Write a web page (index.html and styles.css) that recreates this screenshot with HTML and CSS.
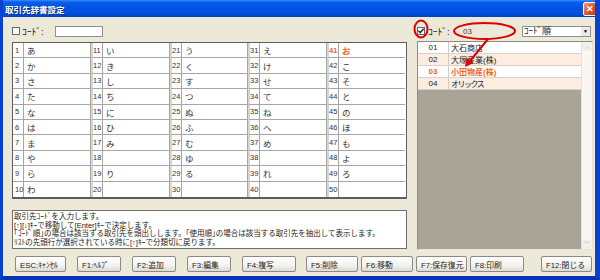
FILE: index.html
```html
<!DOCTYPE html>
<html lang="ja">
<head>
    <meta charset="UTF-8">
    <title>取引先辞書設定</title>
    <link rel="stylesheet" href="styles.css">
</head>
<body>
    <div class="window">
        <div class="titlebar">
            <span class="title">取引先辞書設定</span>
            <span class="close-btn">✕</span>
        </div>

        <div class="client">
            <div class="main">
                <div class="left">
                    <div class="toolbar">
                        <span class="check"></span>
                        <span class="label">ｺｰﾄﾞ:</span>
                        <span class="textbox code-box"></span>
                    </div>

                    <div class="kana-grid">
                        <span class="num">1</span><span class="kana">あ</span>
                        <span class="num sep">11</span><span class="kana">い</span>
                        <span class="num sep">21</span><span class="kana">う</span>
                        <span class="num sep">31</span><span class="kana">え</span>
                        <span class="num sep hot">41</span><span class="kana hot last">お</span>

                        <span class="num">2</span><span class="kana">か</span>
                        <span class="num sep">12</span><span class="kana">き</span>
                        <span class="num sep">22</span><span class="kana">く</span>
                        <span class="num sep">32</span><span class="kana">け</span>
                        <span class="num sep">42</span><span class="kana last">こ</span>

                        <span class="num">3</span><span class="kana">さ</span>
                        <span class="num sep">13</span><span class="kana">し</span>
                        <span class="num sep">23</span><span class="kana">す</span>
                        <span class="num sep">33</span><span class="kana">せ</span>
                        <span class="num sep">43</span><span class="kana last">そ</span>

                        <span class="num">4</span><span class="kana">た</span>
                        <span class="num sep">14</span><span class="kana">ち</span>
                        <span class="num sep">24</span><span class="kana">つ</span>
                        <span class="num sep">34</span><span class="kana">て</span>
                        <span class="num sep">44</span><span class="kana last">と</span>

                        <span class="num">5</span><span class="kana">な</span>
                        <span class="num sep">15</span><span class="kana">に</span>
                        <span class="num sep">25</span><span class="kana">ぬ</span>
                        <span class="num sep">35</span><span class="kana">ね</span>
                        <span class="num sep">45</span><span class="kana last">の</span>

                        <span class="num">6</span><span class="kana">は</span>
                        <span class="num sep">16</span><span class="kana">ひ</span>
                        <span class="num sep">26</span><span class="kana">ふ</span>
                        <span class="num sep">36</span><span class="kana">へ</span>
                        <span class="num sep">46</span><span class="kana last">ほ</span>

                        <span class="num">7</span><span class="kana">ま</span>
                        <span class="num sep">17</span><span class="kana">み</span>
                        <span class="num sep">27</span><span class="kana">む</span>
                        <span class="num sep">37</span><span class="kana">め</span>
                        <span class="num sep">47</span><span class="kana last">も</span>

                        <span class="num">8</span><span class="kana">や</span>
                        <span class="num sep">18</span><span class="kana"></span>
                        <span class="num sep">28</span><span class="kana">ゆ</span>
                        <span class="num sep">38</span><span class="kana"></span>
                        <span class="num sep">48</span><span class="kana last">よ</span>

                        <span class="num">9</span><span class="kana">ら</span>
                        <span class="num sep">19</span><span class="kana">り</span>
                        <span class="num sep">29</span><span class="kana">る</span>
                        <span class="num sep">39</span><span class="kana">れ</span>
                        <span class="num sep">49</span><span class="kana last">ろ</span>

                        <span class="num bottom">10</span><span class="kana bottom">わ</span>
                        <span class="num sep bottom">20</span><span class="kana bottom"></span>
                        <span class="num sep bottom">30</span><span class="kana bottom"></span>
                        <span class="num sep bottom">40</span><span class="kana bottom"></span>
                        <span class="num sep bottom">50</span><span class="kana bottom last"></span>
                    </div>

                    <div class="help">
                        <div>取引先ｺｰﾄﾞを入力します。</div>
                        <div>[↑][↓]ｷｰで移動して[Enter]ｷｰで決定します。</div>
                        <div>｢ｺｰﾄﾞ順｣の場合は該当する取引先を頭出しします。｢使用順｣の場合は該当する取引先を抽出して表示します。</div>
                        <div>ﾘｽﾄの先頭行が選択されている時に[↑]ｷｰで分類切に戻ります。</div>
                    </div>
                </div>

                <div class="right">
                    <div class="toolbar">
                        <span class="check checked">
                            <svg viewBox="0 0 8 8" width="8" height="8"><path d="M1.5 3.8 L3.2 5.6 L6.6 1.8" fill="none" stroke="#222" stroke-width="1.4"/></svg>
                        </span>
                        <span class="label">ｺｰﾄﾞ:</span>
                        <span class="textbox search-box">03</span>
                        <span class="select">
                            <span class="select-text">ｺｰﾄﾞ順</span>
                            <span class="select-arrow">▼</span>
                        </span>
                    </div>

                    <div class="list">
                        <div class="rows">
                            <div class="row"><span class="code">01</span><span class="name">大石商店</span></div>
                            <div class="row alt"><span class="code">02</span><span class="name">大塚産業(株)</span></div>
                            <div class="row hot"><span class="code">03</span><span class="name">小田物産(株)</span></div>
                            <div class="row alt"><span class="code">04</span><span class="name kata">オリックス</span></div>
                        </div>
                        <div class="scrollbar">
                            <span class="sb-btn">︿</span>
                            <span class="sb-btn">﹀</span>
                        </div>
                    </div>
                </div>
            </div>

            <div class="buttons">
                <div class="btn-group wide-gap">
                    <span class="btn w51">ESC:ｷｬﾝｾﾙ</span>
                    <span class="btn w44">F1:ﾍﾙﾌﾟ</span>
                    <span class="btn w44">F2:追加</span>
                    <span class="btn w44">F3:編集</span>
                    <span class="btn w54">F4:複写</span>
                </div>
                <div class="btn-group tight-gap">
                    <span class="btn w52">F5:削除</span>
                    <span class="btn w52">F6:移動</span>
                    <span class="btn w51">F7:保存復元</span>
                    <span class="btn w54">F8:印刷</span>
                </div>
                <span class="btn w51 close-key">F12:閉じる</span>
            </div>
        </div>

        <svg class="marks" width="600" height="280" viewBox="0 0 600 280">
            <ellipse cx="421" cy="29" rx="6.5" ry="8.5" fill="none" stroke="#e00000" stroke-width="2"/>
            <ellipse cx="484.5" cy="31" rx="30.5" ry="8" fill="none" stroke="#e00000" stroke-width="2"/>
            <line x1="488" y1="39" x2="470" y2="61" stroke="#e00000" stroke-width="2"/>
            <polygon points="465,67 466.5,57.5 473.5,63" fill="#e00000"/>
        </svg>
    </div>
</body>
</html>
```

FILE: styles.css
```css
body {
    margin: 0;
    background: #fff;
    font-family: "Liberation Sans", "Noto Sans CJK JP", sans-serif;
}

.window {
    position: relative;
    width: 600px;
    height: 280px;
    box-sizing: border-box;
    display: flex;
    flex-direction: column;
    background: #ece9d8;
    border-left: 3px solid #0842d0;
    border-right: 5px solid #0842d0;
    border-bottom: 4px solid #0735b4;
    overflow: hidden;
}

.titlebar {
    height: 17px;
    margin: 0 -5px 0 -3px;
    padding: 0 3px 0 5px;
    display: flex;
    align-items: center;
    justify-content: space-between;
    background: linear-gradient(#3d8ef8 0, #0a5eec 2px, #0055e6 40%, #004fdc 80%, #0043c4 100%);
}

.title {
    color: #fff;
    font-size: 8.5px;
    font-weight: bold;
    text-shadow: 1px 1px 0 #0a2a7a;
}

.close-btn {
    width: 12px;
    height: 12px;
    display: flex;
    align-items: center;
    justify-content: center;
    border: 1px solid #fff;
    border-radius: 2px;
    background: linear-gradient(135deg, #f19a80, #d95530 55%, #c03b17);
    color: #fff;
    font-size: 9px;
    font-weight: bold;
}

.client {
    flex: 1;
    display: flex;
    flex-direction: column;
    padding: 7px 0 0 9px;
}

.main {
    display: grid;
    grid-template-columns: 395px 176px;
    column-gap: 10px;
}

.left,
.right {
    display: flex;
    flex-direction: column;
}

.toolbar {
    height: 14px;
    display: flex;
    align-items: center;
    font-size: 8px;
    color: #222;
}

.check {
    width: 8px;
    height: 8px;
    box-sizing: border-box;
    border: 1px solid #5a6a80;
    background: #fff;
    display: flex;
}

.check svg {
    margin: -1px;
}

.label {
    margin-left: 2px;
    width: 33px;
    font-size: 9.5px;
}

.textbox {
    height: 11px;
    box-sizing: border-box;
    border: 1px solid #8f8f8f;
    background: #fff;
    font-size: 8px;
    line-height: 9px;
}

.code-box {
    width: 48px;
}

.right .label {
    margin-left: 3px;
    width: 29px;
}

.search-box {
    width: 55px;
    padding-left: 5px;
    border-color: transparent;
    background: transparent;
    color: #444;
}

.select {
    margin-left: 10px;
    width: 69px;
    height: 11px;
    box-sizing: border-box;
    display: flex;
    border: 1px solid #8f8f8f;
    background: #fff;
}

.select-text {
    flex: 1;
    padding-left: 1px;
    font-size: 9px;
    line-height: 9px;
}

.select-arrow {
    width: 9px;
    background: #eceae2;
    font-size: 5px;
    line-height: 9px;
    text-align: center;
    color: #000;
}

.kana-grid {
    margin-top: 4px;
    height: 157px;
    box-sizing: border-box;
    display: grid;
    grid-template-columns: 11px 67px 12px 67px 12px 66px 12px 67px 12px 66px;
    grid-template-rows: repeat(10, 1fr);
    border: 1px solid #5e5e5e;
    border-bottom-width: 2px;
    background: #fff;
}

.num,
.kana {
    display: flex;
    align-items: center;
    box-sizing: border-box;
    border-right: 1px solid #a6a6a6;
    border-bottom: 1px solid #a6a6a6;
    color: #333;
}

.num {
    padding-left: 2px;
    font-size: 7.5px;
}

.num.sep {
    border-left: 2px solid #d6d6d6;
    padding-left: 0;
}

.kana {
    padding-left: 3px;
    font-size: 8.5px;
}

.kana.last {
    border-right: none;
}

.bottom {
    border-bottom: none;
}

.hot {
    color: #ec6a2a;
    font-weight: bold;
}

.help {
    margin-top: 11px;
    height: 39px;
    box-sizing: border-box;
    padding: 2px 1px;
    border: 1px solid #6f6f6f;
    background: #fff;
    font-size: 7.5px;
    line-height: 8.5px;
    color: #222;
    white-space: nowrap;
    overflow: hidden;
}

.list {
    margin-top: 3px;
    height: 209px;
    box-sizing: border-box;
    display: flex;
    border: 1px solid #8c8c84;
    border-right-color: #e6e4da;
    border-bottom-color: #e6e4da;
    background: #a8a598;
}

.rows {
    flex: 1;
}

.row {
    height: 12px;
    box-sizing: border-box;
    display: flex;
    background: #fff;
    border-bottom: 1px solid #d8d2c8;
    font-size: 8px;
    color: #222;
}

.row.alt {
    background: #fdece0;
}

.row.hot {
    color: #ee6a26;
    font-weight: bold;
}

.code {
    width: 30px;
    display: flex;
    align-items: center;
    justify-content: center;
    border-right: 1px solid #d0ccc4;
}

.name {
    display: flex;
    align-items: center;
    padding-left: 2px;
}

.name.kata {
    letter-spacing: -1.5px;
}

.scrollbar {
    width: 10px;
    display: flex;
    flex-direction: column;
    justify-content: space-between;
    background: #f8f7f2;
    border-left: 1px solid #e4e2da;
}

.sb-btn {
    height: 9px;
    font-size: 6px;
    line-height: 9px;
    text-align: center;
    color: #c4c2ba;
    background: #f1f0ea;
}

.buttons {
    margin-top: 6px;
    height: 16px;
    display: flex;
    padding-left: 3px;
}

.btn-group {
    display: flex;
}

.wide-gap {
    gap: 11px;
}

.tight-gap {
    margin-left: 10px;
    gap: 3px;
}

.btn {
    height: 16px;
    box-sizing: border-box;
    display: flex;
    align-items: center;
    padding-left: 4px;
    border: 1px solid #8a8a86;
    border-radius: 2px;
    background: linear-gradient(#ffffff, #f3f2ee 60%, #dcdad2);
    font-size: 7.8px;
    color: #222;
    white-space: nowrap;
}

.w44 { width: 44px; }
.w51 { width: 51px; }
.w52 { width: 52px; }
.w54 { width: 54px; }

.close-key {
    margin-left: 17px;
}

.marks {
    position: absolute;
    left: -3px;
    top: 0;
    pointer-events: none;
}
```
